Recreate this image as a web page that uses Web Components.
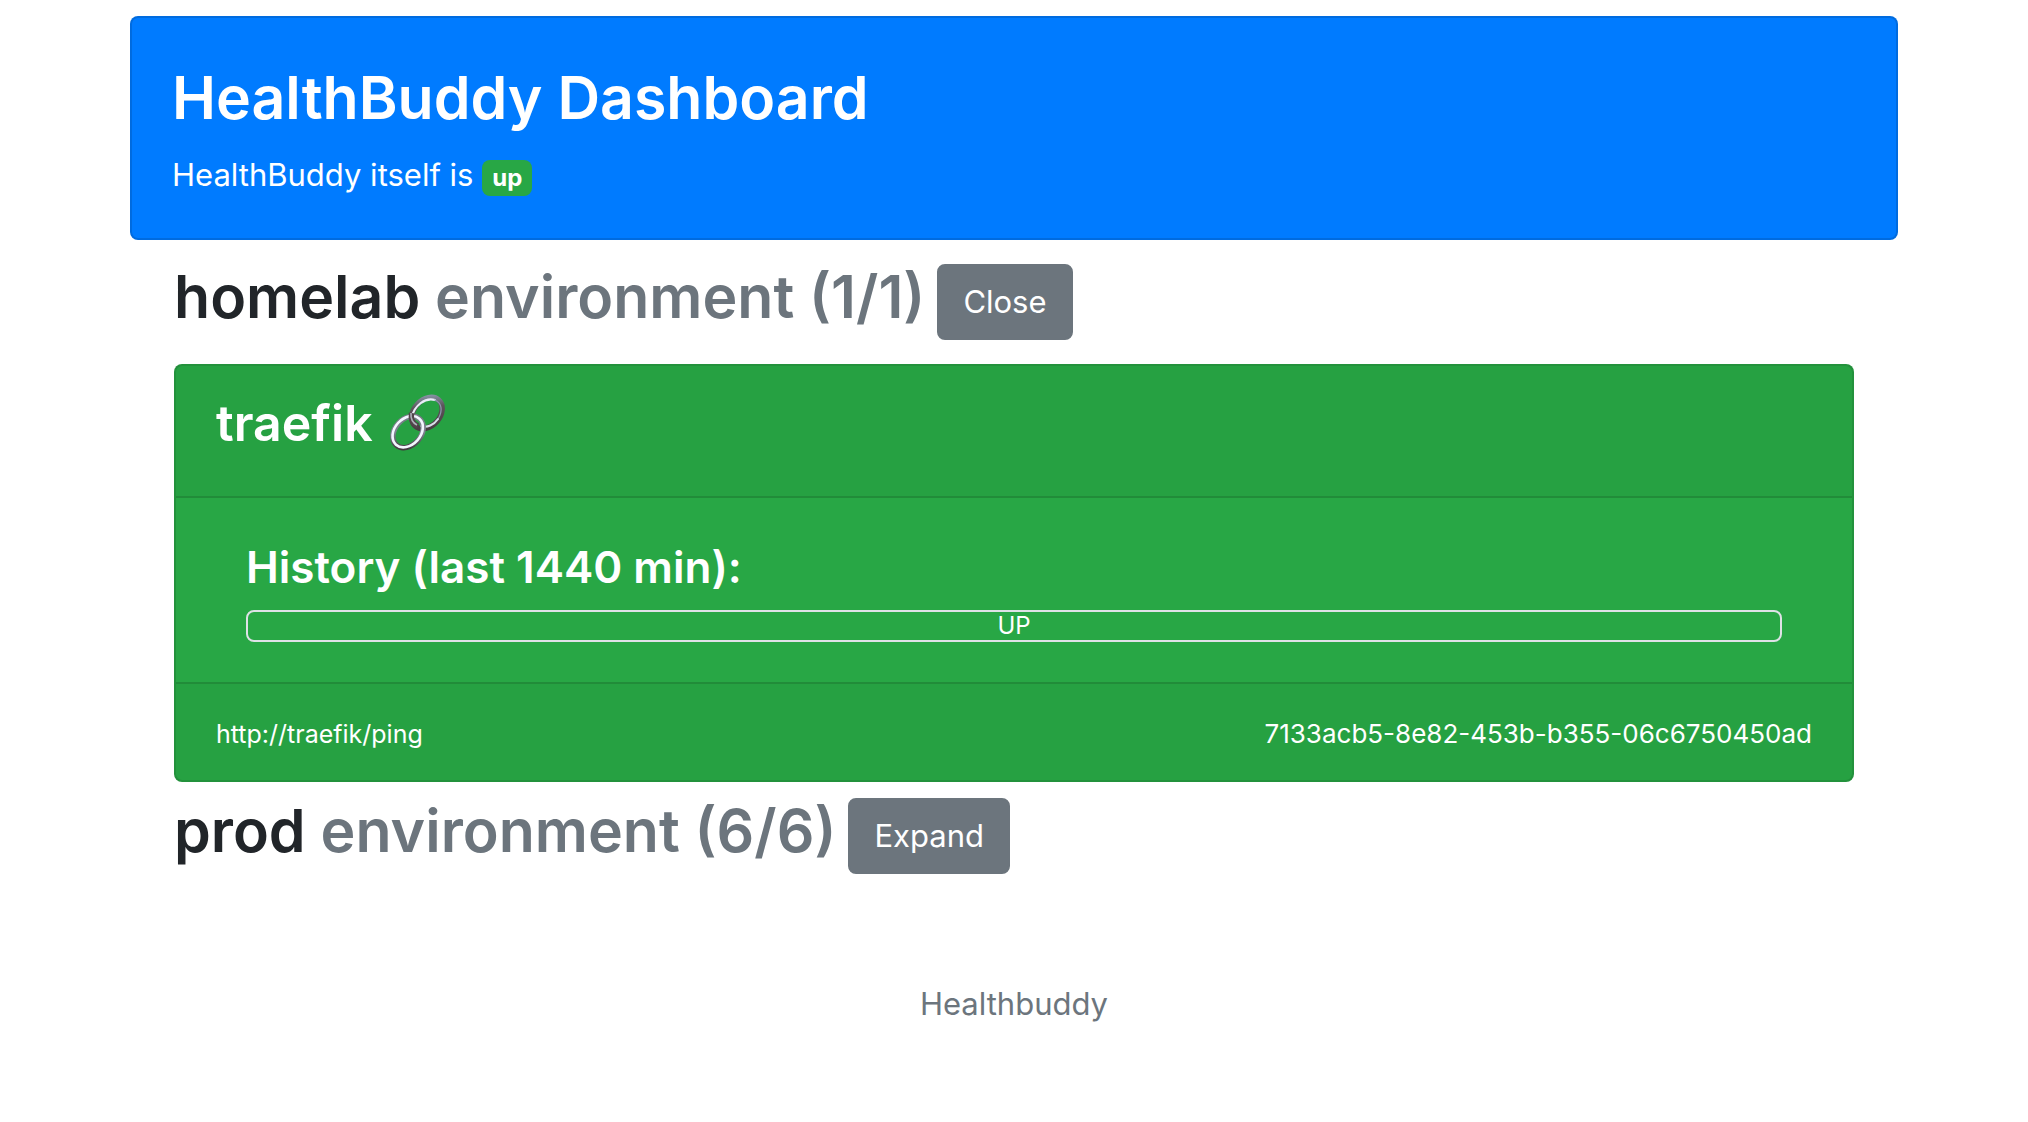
<!DOCTYPE html>
<html lang="en">
<head>
<meta charset="utf-8">
<meta name="viewport" content="width=device-width, initial-scale=1">
<title>HealthBuddy Dashboard</title>
<style>
  body {
    margin: 0;
    background: #fff;
    color: #212529;
    font: 400 31px/48px Inter, "Liberation Sans", sans-serif;
  }
</style>
</head>
<body>
<hb-dashboard></hb-dashboard>

<template id="tpl-dashboard">
  <style>
    :host { display: block; max-width: 1768px; margin: 0 auto; padding: 16px 24px; }
    main { padding: 0 44px; }
    hb-environment { margin-top: 9px; }
    hb-environment:first-child { margin-top: 17px; }
    footer { margin-top: 106px; text-align: center; color: #6c757d; }
  </style>
  <hb-banner status="up">HealthBuddy Dashboard</hb-banner>
  <main>
    <hb-environment name="homelab" count="1/1" action="Close">
      <hb-service name="traefik" url="http://traefik/ping" uid="7133acb5-8e82-453b-b355-06c6750450ad">
        <hb-history minutes="1440">UP</hb-history>
      </hb-service>
    </hb-environment>
    <hb-environment name="prod" count="6/6" action="Expand"></hb-environment>
  </main>
  <footer>Healthbuddy</footer>
</template>

<template id="tpl-banner">
  <style>
    :host { display: block; }
    header { padding: 40px 40px 39px; border: 2px solid rgba(0,0,0,.125); border-radius: 8px; background: #007bff; color: #fff; }
    h1 { margin: 0 0 14px; font-size: 59px; line-height: 79px; font-weight: 600; }
    p { margin: 0; }
  </style>
  <header>
    <h1><slot></slot></h1>
    <p>HealthBuddy itself is <hb-badge></hb-badge></p>
  </header>
</template>

<template id="tpl-badge">
  <style>
    :host { display: inline-block; padding: 6px 10px; border-radius: 8px; background: #28a745; color: #fff; font-size: 24px; line-height: 24px; font-weight: 700; vertical-align: baseline; }
  </style>
  <slot></slot>
</template>

<template id="tpl-environment">
  <style>
    :host { display: block; }
    h2 { margin: 0; font-size: 59px; line-height: 79px; font-weight: 600; }
    small { font-size: inherit; color: #6c757d; }
    button { margin: 0 0 0 12px; padding: 12px 24px; border: 2px solid #6c757d; border-radius: 8px; background: #6c757d; color: #fff; font: 400 31px/48px Inter, "Liberation Sans", sans-serif; vertical-align: middle; cursor: pointer; }
    ::slotted(*) { margin-top: 24px; }
  </style>
  <section>
    <h2><span class="name"></span> <small></small><button type="button"></button></h2>
    <slot></slot>
  </section>
</template>

<template id="tpl-service">
  <style>
    :host { display: block; }
    article { border: 2px solid rgba(0,0,0,.125); border-radius: 8px; background: #28a745; color: #fff; }
    header { padding: 24px 40px 39px; border-bottom: 2px solid rgba(0,0,0,.125); background: rgba(0,0,0,.03); }
    h3 { display: flex; align-items: center; gap: 16px; margin: 0; font-size: 50px; line-height: 67px; font-weight: 600; }
    a { display: flex; }
    svg { width: 58px; height: 58px; }
    .body { padding: 40px 70px; }
    footer { display: flex; justify-content: space-between; padding: 24px 40px; border-top: 2px solid rgba(0,0,0,.125); background: rgba(0,0,0,.03); }
    small { font-size: 25px; line-height: 1; }
    .uid { font-size: 26px; }
  </style>
  <article>
    <header>
      <h3><span class="name"></span>
        <a aria-label="Open service">
          <svg viewBox="0 0 58 58" fill="none" aria-hidden="true">
            <defs>
              <linearGradient id="far" gradientUnits="userSpaceOnUse" x1="24" y1="5" x2="53" y2="32">
                <stop offset="0" stop-color="#8d9db0"/><stop offset=".35" stop-color="#5d545b"/>
                <stop offset="1" stop-color="#44383e"/>
              </linearGradient>
              <linearGradient id="near" gradientUnits="userSpaceOnUse" x1="6" y1="24" x2="32" y2="52">
                <stop offset="0" stop-color="#71777f"/><stop offset=".5" stop-color="#7f8592"/>
                <stop offset="1" stop-color="#3b3036"/>
              </linearGradient>
            </defs>
            <ellipse cx="38" cy="19" rx="13" ry="17.500" transform="rotate(42 38 19)" stroke="url(#far)" stroke-width="5.500"/>
            <path d="M23 23C25 12 36 3 46 6" stroke="#e9eef8" stroke-width="2.200" stroke-linecap="round"/>
            <path d="M46 6C53 9 54 17 49 25" stroke="#8b97ad" stroke-width="1.300" stroke-linecap="round"/>
            <path d="M49 25C45 31 38 34 32 32" stroke="#d9dee9" stroke-width="2" stroke-linecap="round"/>
            <ellipse cx="19" cy="38" rx="13" ry="17.500" transform="rotate(42 19 38)" stroke="url(#near)" stroke-width="5.500"/>
            <ellipse cx="18.700" cy="37.700" rx="13" ry="17.500" transform="rotate(42 18.700 37.700)" stroke="#f4f6ff" stroke-width="2.600"/>
            <path d="M22.500 19C21.500 25 24 30 29 32" stroke="#514449" stroke-width="5.500"/>
            <path d="M22 19C21.500 25 24 29 28 31" stroke="#aeb0ba" stroke-width="1.600"/>
          </svg>
        </a>
      </h3>
    </header>
    <div class="body"><slot></slot></div>
    <footer><span><small class="url"></small></span><span><small class="uid"></small></span></footer>
  </article>
</template>

<template id="tpl-history">
  <style>
    :host { display: block; }
    h4 { margin: 0 0 14px; font-size: 44px; line-height: 58px; font-weight: 600; }
    .bar { box-sizing: border-box; height: 32px; border: 2px solid #dee2e6; border-radius: 8px; background: #28a745; color: #fff; font-size: 24px; line-height: 28px; text-align: center; }
  </style>
  <h4></h4>
  <div class="bar"><slot></slot></div>
</template>

<script>
  class HbElement extends HTMLElement {
    constructor() {
      super();
      const tpl = document.getElementById(this.constructor.template);
      this.attachShadow({ mode: "open" }).append(document.importNode(tpl.content, true));
    }
    text(selector, value) { this.shadowRoot.querySelector(selector).textContent = value; }
  }

  class HbBadge extends HbElement { static template = "tpl-badge"; }

  class HbHistory extends HbElement {
    static template = "tpl-history";
    connectedCallback() { this.text("h4", `History (last ${this.getAttribute("minutes")} min):`); }
  }

  class HbService extends HbElement {
    static template = "tpl-service";
    connectedCallback() {
      this.text(".name", this.getAttribute("name"));
      this.text(".url", this.getAttribute("url"));
      this.text(".uid", this.getAttribute("uid"));
      this.shadowRoot.querySelector("a").href = this.getAttribute("url");
    }
  }

  class HbEnvironment extends HbElement {
    static template = "tpl-environment";
    connectedCallback() {
      this.text(".name", this.getAttribute("name"));
      this.text("small", `environment (${this.getAttribute("count")})`);
      this.text("button", this.getAttribute("action"));
    }
  }

  class HbBanner extends HbElement {
    static template = "tpl-banner";
    connectedCallback() { this.text("hb-badge", this.getAttribute("status")); }
  }

  class HbDashboard extends HbElement { static template = "tpl-dashboard"; }

  customElements.define("hb-badge", HbBadge);
  customElements.define("hb-history", HbHistory);
  customElements.define("hb-service", HbService);
  customElements.define("hb-environment", HbEnvironment);
  customElements.define("hb-banner", HbBanner);
  customElements.define("hb-dashboard", HbDashboard);
</script>
</body>
</html>
